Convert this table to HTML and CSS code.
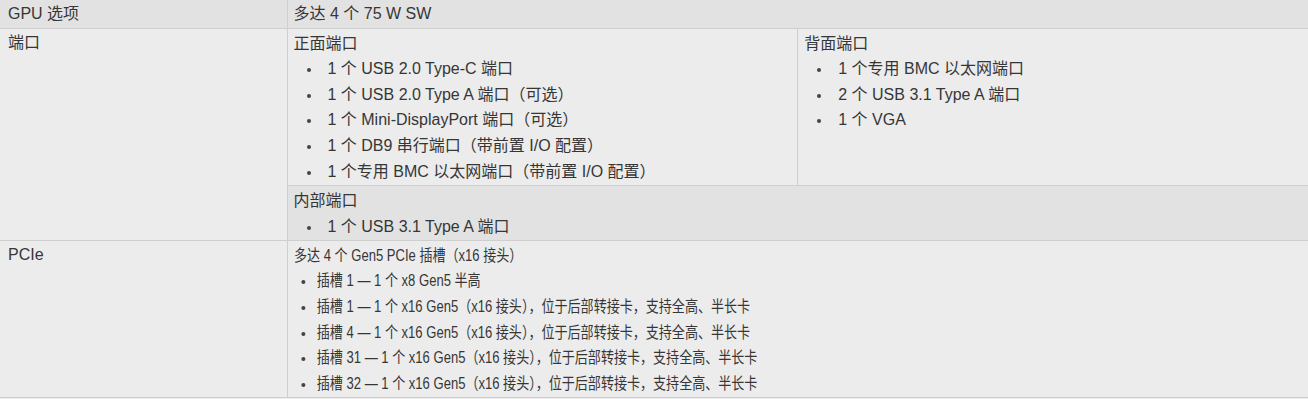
FILE: index.html
```html
<!DOCTYPE html>
<html lang="zh-CN">
<head>
    <meta charset="UTF-8">
    <meta name="viewport" content="width=device-width, initial-scale=1.0">
    <title>规格</title>
    <link rel="stylesheet" href="styles.css">
</head>
<body>
    <table class="spec">
        <colgroup>
            <col class="label-col">
            <col>
        </colgroup>
        <tr class="shade">
            <th>GPU 选项</th>
            <td>多达 4 个 75 W SW</td>
        </tr>
        <tr>
            <th>端口</th>
            <td class="holder">
                <table class="ports">
                    <tr>
                        <td>
                            <div class="group-title">正面端口</div>
                            <ul class="dots">
                                <li>1 个 USB 2.0 Type-C 端口</li>
                                <li>1 个 USB 2.0 Type A 端口（可选）</li>
                                <li>1 个 Mini-DisplayPort 端口（可选）</li>
                                <li>1 个 DB9 串行端口（带前置 I/O 配置）</li>
                                <li>1 个专用 BMC 以太网端口（带前置 I/O 配置）</li>
                            </ul>
                        </td>
                        <td>
                            <div class="group-title">背面端口</div>
                            <ul class="dots">
                                <li>1 个专用 BMC 以太网端口</li>
                                <li>2 个 USB 3.1 Type A 端口</li>
                                <li>1 个 VGA</li>
                            </ul>
                        </td>
                    </tr>
                    <tr class="shade">
                        <td colspan="2">
                            <div class="group-title">内部端口</div>
                            <ul class="dots">
                                <li>1 个 USB 3.1 Type A 端口</li>
                            </ul>
                        </td>
                    </tr>
                </table>
            </td>
        </tr>
        <tr>
            <th>PCIe</th>
            <td>
                <div class="narrow">
                    <div class="group-title">多达 4 个 Gen5 PCIe 插槽（x16 接头）</div>
                    <ul class="dots">
                        <li>插槽 1 — 1 个 x8 Gen5 半高</li>
                        <li>插槽 1 — 1 个 x16 Gen5（x16 接头），位于后部转接卡，支持全高、半长卡</li>
                        <li>插槽 4 — 1 个 x16 Gen5（x16 接头），位于后部转接卡，支持全高、半长卡</li>
                        <li>插槽 31 — 1 个 x16 Gen5（x16 接头），位于后部转接卡，支持全高、半长卡</li>
                        <li>插槽 32 — 1 个 x16 Gen5（x16 接头），位于后部转接卡，支持全高、半长卡</li>
                    </ul>
                </div>
            </td>
        </tr>
    </table>
</body>
</html>
```

FILE: styles.css
```css
body {
    margin: 0;
    padding: 0;
    font-family: "Liberation Sans", Arial, "Noto Sans CJK SC", sans-serif;
    font-size: 16px;
    line-height: 25.6px;
    color: #363636;
    background-color: #ececec;
}

.spec {
    width: 100%;
    border-collapse: collapse;
    table-layout: fixed;
}

.label-col {
    width: 287px;
}

.spec th,
.spec td {
    padding: 1px 7px 1px 6px;
    text-align: left;
    vertical-align: top;
    font-weight: normal;
    background-color: #ececec;
}

.spec > tbody > tr > th,
.spec > tbody > tr > td {
    border-bottom: 1px solid #cfcfcf;
}

.spec > tbody > tr > th {
    padding-left: 8px;
    border-right: 1px solid #cfcfcf;
}

.spec .shade > th,
.spec .shade > td {
    background-color: #e2e2e2;
}

/* nested ports table fills the whole cell */
.spec td.holder {
    padding: 0;
}

.ports {
    width: 100%;
    border-collapse: collapse;
    table-layout: fixed;
}

.ports td {
    padding: 2px 7px 1px 6px;
}

.ports tr:first-child td {
    border-bottom: 1px solid #cfcfcf;
}

.ports tr:first-child td:first-child {
    border-right: 1px solid #cfcfcf;
}

.dots {
    list-style: none;
    margin: 0;
    padding: 0;
}

.dots li {
    position: relative;
    padding-left: 34px;
}

.dots li::before {
    content: "";
    position: absolute;
    left: 13px;
    top: 12px;
    width: 4px;
    height: 4px;
    border-radius: 50%;
    background-color: #444;
}

.narrow {
    transform: scaleX(0.815);
    transform-origin: left top;
    white-space: nowrap;
    padding-top: 0.5px;
}

.narrow .dots li {
    padding-left: 28px;
}

.narrow .dots li::before {
    left: 9px;
    width: 5px;
}
```
